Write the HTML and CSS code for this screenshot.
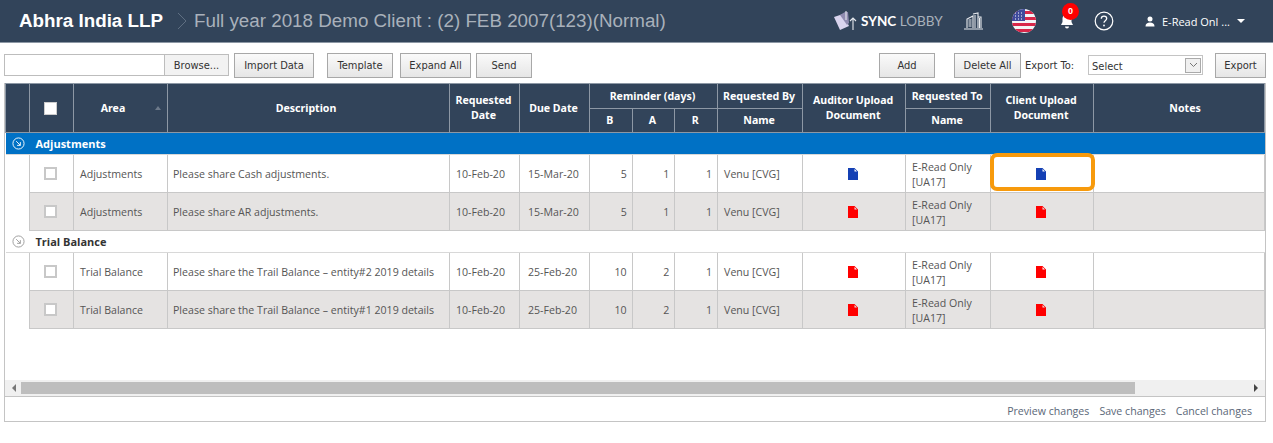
FILE: index.html
```html
<!DOCTYPE html>
<html lang="en">

<head>
    <meta charset="UTF-8">
    <title>Document Requests</title>
    <link rel="stylesheet" href="styles.css">
</head>

<body>
    <header class="topbar">
        <span class="brand">Abhra India LLP</span>
        <svg class="crumb" width="12" height="20" viewBox="0 0 12 20"><path d="M2 2l8 8-8 8" fill="none" stroke="#5f6f82" stroke-width="1"/></svg>
        <span class="title">Full year 2018 Demo Client : (2) FEB 2007(123)(Normal)</span>
        <div class="topicons">
            <svg class="sync-logo" width="24" height="20" viewBox="0 0 24 20">
                <path d="M0 6l9-3 6 12-9 4z" fill="#d9d4ee"/>
                <path d="M6 4l5-3 3 0 1 11-2 2z" fill="#8f8bb0"/>
                <path d="M12 0v9M19 19V7m-3 3l3-3 3 3" fill="none" stroke="#e6e9ee" stroke-width="1.1"/>
            </svg>
            <span class="sync-text"><b>SYNC</b> LOBBY</span>
            <svg class="building" width="20" height="18" viewBox="0 0 20 18">
                <path d="M3 16V7l6-3v12M9 2l5-1v15M14 5h3v11M0 17h19" fill="none" stroke="#e8ebef" stroke-width="1.1"/>
                <path d="M4.500 8h3M4.500 10h3M4.500 12h3M4.500 14h3M11 3v13M15.500 6v10" stroke="#e8ebef" stroke-width="1"/>
            </svg>
            <svg class="flag" width="24" height="24" viewBox="0 0 24 24">
                <defs><clipPath id="round"><circle cx="12" cy="12" r="12"/></clipPath></defs>
                <g clip-path="url(#round)">
                    <rect width="24" height="24" fill="#f4f4f6"/>
                    <path d="M0 2h24v3H0zM0 8h24v3H0zM0 14h24v3H0zM0 20h24v3H0z" fill="#d8274a"/>
                    <rect width="13" height="12" fill="#3f4a9c"/>
                    <path d="M3 4h1M6 4h1M9 4h1M3 7h1M6 7h1M9 7h1M3 10h1M6 10h1M9 10h1" stroke="#fff" stroke-width="1"/>
                </g>
            </svg>
            <div class="bell">
                <svg width="14" height="16" viewBox="0 0 14 16"><path d="M7 1c3 0 4.500 2.500 4.500 5v3L13 12H1l1.500-3V6C2.500 3.500 4 1 7 1zM5 13.500h4a2 2 0 0 1-4 0z" fill="#fff"/></svg>
                <span class="badge">0</span>
            </div>
            <svg class="help" width="20" height="20" viewBox="0 0 20 20">
                <circle cx="10" cy="10" r="8.800" fill="none" stroke="#fff" stroke-width="1.200"/>
                <path d="M7.300 7.800c0-1.700 1.200-2.600 2.700-2.600s2.700 1 2.700 2.400c0 2.100-2.700 2.200-2.700 4.200" fill="none" stroke="#fff" stroke-width="1.300"/>
                <circle cx="10" cy="14.500" r="0.900" fill="#fff"/>
            </svg>
            <div class="user">
                <svg width="10" height="11" viewBox="0 0 10 11"><circle cx="5" cy="3" r="2.500" fill="#fff"/><path d="M0.500 10.500c0-3 2-4 4.500-4s4.500 1 4.500 4z" fill="#fff"/></svg>
                <span>E-Read Onl ...</span>
                <i class="caret"></i>
            </div>
        </div>
    </header>

    <div class="toolbar">
        <div class="file-pick">
            <span class="file-name"></span>
            <button class="browse">Browse...</button>
        </div>
        <button class="btn import">Import Data</button>
        <button class="btn template">Template</button>
        <button class="btn expand">Expand All</button>
        <button class="btn send">Send</button>
        <button class="btn add">Add</button>
        <button class="btn delete">Delete All</button>
        <label class="export-label">Export To:</label>
        <div class="select-box">
            <span class="select-text">Select</span>
            <span class="select-arrow"><svg width="9" height="6" viewBox="0 0 9 6"><path d="M1 1l3.500 3.500L8 1" fill="none" stroke="#777" stroke-width="1"/></svg></span>
        </div>
        <button class="btn export">Export</button>
    </div>

    <main class="panel">
        <table class="grid">
            <colgroup>
                <col class="c-exp"><col class="c-chk"><col class="c-area"><col class="c-desc"><col class="c-date"><col class="c-date">
                <col class="c-b"><col class="c-b"><col class="c-b"><col class="c-name"><col class="c-aud"><col class="c-to"><col class="c-cli"><col>
            </colgroup>
            <thead>
                <tr class="head-top">
                    <th rowspan="2"></th>
                    <th rowspan="2"><span class="head-check"></span></th>
                    <th rowspan="2" class="area-head">Area<i class="sort"></i></th>
                    <th rowspan="2" class="desc-head">Description</th>
                    <th rowspan="2">Requested Date</th>
                    <th rowspan="2">Due Date</th>
                    <th colspan="3">Reminder (days)</th>
                    <th>Requested By</th>
                    <th rowspan="2">Auditor Upload Document</th>
                    <th>Requested To</th>
                    <th rowspan="2">Client Upload Document</th>
                    <th rowspan="2" class="notes-head">Notes</th>
                </tr>
                <tr class="head-bottom">
                    <th>B</th><th>A</th><th>R</th><th>Name</th><th>Name</th>
                </tr>
            </thead>
            <tbody>
                <tr class="group selected">
                    <td class="exp"><svg width="13" height="13" viewBox="0 0 14 14"><circle cx="7" cy="7" r="6" fill="none" stroke="#fff"/><path d="M4.500 4.500L9 9M9 5.500V9H5.500" fill="none" stroke="#fff"/></svg></td>
                    <td colspan="13">Adjustments</td>
                </tr>
                <tr class="row">
                    <td class="blank"></td>
                    <td class="chk"><span class="box"></span></td>
                    <td>Adjustments</td>
                    <td class="desc">Please share Cash adjustments.</td>
                    <td class="date">10-Feb-20</td><td class="due">15-Mar-20</td>
                    <td class="num">5</td><td class="num">1</td><td class="num">1</td>
                    <td>Venu [CVG]</td>
                    <td class="doc"><svg class="file blue" viewBox="0 0 10 12"><path d="M0 0h6.500L10 3.500V12H0zM6.500 1v2.500H9z" fill-rule="evenodd"/></svg></td>
                    <td>E-Read Only [UA17]</td>
                    <td class="doc focus"><svg class="file blue" viewBox="0 0 10 12"><path d="M0 0h6.500L10 3.500V12H0zM6.500 1v2.500H9z" fill-rule="evenodd"/></svg><div class="highlight"></div></td>
                    <td></td>
                </tr>
                <tr class="row alt">
                    <td class="blank"></td>
                    <td class="chk"><span class="box"></span></td>
                    <td>Adjustments</td>
                    <td class="desc">Please share AR adjustments.</td>
                    <td class="date">10-Feb-20</td><td class="due">15-Mar-20</td>
                    <td class="num">5</td><td class="num">1</td><td class="num">1</td>
                    <td>Venu [CVG]</td>
                    <td class="doc"><svg class="file red" viewBox="0 0 10 12"><path d="M0 0h6.500L10 3.500V12H0zM6.500 1v2.500H9z" fill-rule="evenodd"/></svg></td>
                    <td>E-Read Only [UA17]</td>
                    <td class="doc"><svg class="file red" viewBox="0 0 10 12"><path d="M0 0h6.500L10 3.500V12H0zM6.500 1v2.500H9z" fill-rule="evenodd"/></svg></td>
                    <td></td>
                </tr>
                <tr class="group">
                    <td class="exp"><svg width="13" height="13" viewBox="0 0 14 14"><circle cx="7" cy="7" r="6" fill="none" stroke="#999"/><path d="M4.500 4.500L9 9M9 5.500V9H5.500" fill="none" stroke="#999"/></svg></td>
                    <td colspan="13">Trial Balance</td>
                </tr>
                <tr class="row">
                    <td class="blank"></td>
                    <td class="chk"><span class="box"></span></td>
                    <td>Trial Balance</td>
                    <td class="desc">Please share the Trail Balance – entity#2 2019 details</td>
                    <td class="date">10-Feb-20</td><td class="due">25-Feb-20</td>
                    <td class="num">10</td><td class="num">2</td><td class="num">1</td>
                    <td>Venu [CVG]</td>
                    <td class="doc"><svg class="file red" viewBox="0 0 10 12"><path d="M0 0h6.500L10 3.500V12H0zM6.500 1v2.500H9z" fill-rule="evenodd"/></svg></td>
                    <td>E-Read Only [UA17]</td>
                    <td class="doc"><svg class="file red" viewBox="0 0 10 12"><path d="M0 0h6.500L10 3.500V12H0zM6.500 1v2.500H9z" fill-rule="evenodd"/></svg></td>
                    <td></td>
                </tr>
                <tr class="row alt">
                    <td class="blank"></td>
                    <td class="chk"><span class="box"></span></td>
                    <td>Trial Balance</td>
                    <td class="desc">Please share the Trail Balance – entity#1 2019 details</td>
                    <td class="date">10-Feb-20</td><td class="due">25-Feb-20</td>
                    <td class="num">10</td><td class="num">2</td><td class="num">1</td>
                    <td>Venu [CVG]</td>
                    <td class="doc"><svg class="file red" viewBox="0 0 10 12"><path d="M0 0h6.500L10 3.500V12H0zM6.500 1v2.500H9z" fill-rule="evenodd"/></svg></td>
                    <td>E-Read Only [UA17]</td>
                    <td class="doc"><svg class="file red" viewBox="0 0 10 12"><path d="M0 0h6.500L10 3.500V12H0zM6.500 1v2.500H9z" fill-rule="evenodd"/></svg></td>
                    <td></td>
                </tr>
            </tbody>
        </table>
        <div class="scrollbar">
            <i class="arrow-left"></i>
            <div class="track"><div class="thumb"></div></div>
            <i class="arrow-right"></i>
        </div>
        <footer class="actions">
            <a>Preview changes</a>
            <a>Save changes</a>
            <a>Cancel changes</a>
        </footer>
    </main>
</body>

</html>
```

FILE: styles.css
```css
* {
    margin: 0;
    padding: 0;
    box-sizing: border-box;
}

body {
    width: 1273px;
    height: 443px;
    overflow: hidden;
    background-color: white;
    font-family: "Open Sans", "Noto Sans", sans-serif;
    font-size: 10.6px;
    color: #555;
}

/* top bar */
.topbar {
    height: 43px;
    display: flex;
    align-items: center;
    padding-left: 19px;
    background-color: #32445a;
    border-bottom: 1px solid #8d98a5;
    font-family: "Liberation Sans", sans-serif;
}

.brand {
    font-size: 18.8px;
    font-weight: bold;
    color: white;
}

.crumb {
    margin-left: 13px;
    margin-right: 6px;
}

.title {
    font-size: 18.8px;
    color: #a9b1bb;
}

.topicons {
    margin-left: auto;
    display: flex;
    align-items: center;
    height: 100%;
}

.sync-logo {
    margin-right: 3px;
}

.sync-text {
    width: 79px;
    white-space: nowrap;
    font-family: "Lato", sans-serif;
    font-size: 13.5px;
    color: #a9b1bb;
}

.sync-text b {
    color: white;
}

.building {
    margin-left: 24px;
}

.flag {
    margin-left: 28px;
}

.bell {
    position: relative;
    width: 14px;
    height: 16px;
    margin-left: 24px;
}

.badge {
    position: absolute;
    top: -10px;
    left: 2px;
    width: 17px;
    height: 17px;
    border-radius: 50%;
    background-color: #f00;
    color: white;
    font-size: 9px;
    font-weight: bold;
    line-height: 17px;
    text-align: center;
}

.help {
    margin-left: 20px;
}

.user {
    width: 128px;
    margin-left: 31px;
    display: flex;
    align-items: center;
    gap: 7px;
    color: white;
    font-family: "Open Sans", sans-serif;
    font-size: 11px;
}

.caret {
    width: 0;
    height: 0;
    border-left: 4px solid transparent;
    border-right: 4px solid transparent;
    border-top: 4px solid white;
}

/* toolbar */
.toolbar {
    height: 40px;
    display: flex;
    align-items: center;
    padding-left: 4px;
    padding-top: 4px;
    font-family: "DejaVu Sans Condensed", "Noto Sans", sans-serif;
    font-size: 11px;
    color: #333;
}

.file-pick {
    display: flex;
    height: 22px;
    width: 225px;
    border: 1px solid #bdbdbd;
}

.file-name {
    flex: 1;
}

.browse {
    width: 64px;
    border: 0;
    border-left: 1px solid #bdbdbd;
    background-color: #f2f2f2;
    font: inherit;
    color: #333;
}

.btn {
    height: 25px;
    border: 1px solid #a8a8a8;
    background: linear-gradient(#fafafa, #e6e6e6);
    font: inherit;
    color: #333;
}

.import { width: 80px; margin-left: 5px; }
.template { width: 66px; margin-left: 13px; }
.expand { width: 71px; margin-left: 7px; }
.send { width: 56px; margin-left: 5px; }
.add { width: 56px; margin-left: 347px; }
.delete { width: 67px; margin-left: 19px; }

.export-label {
    width: 63px;
    margin-left: 4px;
    white-space: nowrap;
}

.select-box {
    width: 115px;
    height: 20px;
    display: flex;
    align-items: center;
    justify-content: space-between;
    padding: 0 1px 0 3px;
    border: 1px solid #c4c4c4;
    background-color: white;
}

.select-text {
    padding-top: 2px;
}

.select-arrow {
    width: 16px;
    height: 15px;
    display: flex;
    align-items: center;
    justify-content: center;
    border: 1px solid #aaa;
    background-color: #f0f0f0;
}

.export { width: 51px; margin-left: 12px; }

/* grid */
.panel {
    width: 1262px;
    height: 339px;
    margin-left: 4px;
    display: flex;
    flex-direction: column;
    border: 1px solid #c4c4c4;
    border-top: 0;
}

.grid {
    width: 1260px;
    table-layout: fixed;
    border-collapse: collapse;
}

.c-exp { width: 24px; }
.c-chk { width: 44px; }
.c-area { width: 94px; }
.c-desc { width: 282px; }
.c-date { width: 70px; }
.c-b { width: 42.700px; }
.c-name { width: 85px; }
.c-aud { width: 103px; }
.c-to { width: 85px; }
.c-cli { width: 103px; }

.grid th {
    background-color: #32445a;
    border: 1px solid #8d98a5;
    color: white;
    font-family: "Noto Sans", sans-serif;
    font-size: 10.6px;
    font-weight: bold;
    line-height: 15px;
    text-align: center;
    padding: 0 6px 0 4px;
}

.head-top th {
    height: 25px;
}

.head-bottom th {
    height: 24px;
}

.head-check {
    display: block;
    width: 13px;
    height: 13px;
    margin: 0 auto;
    background-color: white;
    border: 1px solid #ccc;
}

.grid th.area-head {
    position: relative;
    padding-right: 19px;
}

.grid th.desc-head {
    padding-right: 9px;
}

.grid th.notes-head {
    padding-left: 18px;
}

.sort {
    position: absolute;
    top: 22px;
    right: 6px;
    border-left: 3px solid transparent;
    border-right: 3px solid transparent;
    border-bottom: 4px solid #6d7a8a;
}

.group td {
    height: 22px;
    font-weight: bold;
    font-size: 11px;
    color: #333;
    padding-left: 6px;
    border-bottom: 1px solid #d8d8d8;
}

.group td.exp {
    padding: 3px 0 0 6px;
    border-right: 0;
}

.selected td {
    background-color: #0071c5;
    color: white;
}

.row td {
    height: 38px;
    padding: 2px 5px 0 6px;
    border: 1px solid #c8c8c8;
    line-height: 15px;
    background-color: white;
}

.row td.blank {
    border-left: 0;
    border-top: 0;
    border-bottom: 0;
}

.alt td {
    background-color: #e5e3e2;
}

.alt td.blank {
    background-color: white;
}

.row td.desc {
    padding-left: 5px;
}

.row td.date {
    padding-left: 6px;
}

.row td.due {
    padding-left: 8px;
}

.row td.num {
    text-align: right;
}

.row td.chk,
.row td.doc {
    text-align: center;
}

.row td.chk {
    padding: 0 7px 0 5px;
}

.row td.doc {
    padding: 0 8px 0 5px;
}

.box {
    display: block;
    width: 13px;
    height: 13px;
    margin: 0 auto;
    background-color: white;
    border: 2px solid #c8c8c8;
}

.file {
    display: block;
    width: 10px;
    height: 12px;
    margin: 0 auto;
}

.blue { fill: #1440b4; }
.red { fill: #f00; }

.focus {
    position: relative;
}

.highlight {
    position: absolute;
    top: -2px;
    left: -1px;
    right: -2px;
    bottom: 1px;
    border: 4px solid #f79a0c;
    border-radius: 7px;
}

.scrollbar {
    height: 17px;
    margin-top: auto;
    display: flex;
    align-items: center;
    background-color: #f0f0f0;
    border-bottom: 1px solid #c4c4c4;
}

.track {
    flex: 1;
    height: 12px;
}

.thumb {
    width: 1114px;
    height: 100%;
    background-color: #bebebe;
}

.arrow-left {
    margin: 0 5px 0 7px;
    border-top: 4px solid transparent;
    border-bottom: 4px solid transparent;
    border-right: 4px solid #777;
}

.arrow-right {
    margin: 0 7px 0 6px;
    border-top: 4px solid transparent;
    border-bottom: 4px solid transparent;
    border-left: 4px solid #444;
}

.actions {
    height: 24px;
    display: flex;
    justify-content: flex-end;
    align-items: center;
    gap: 10px;
    padding-top: 3px;
    padding-right: 13px;
    color: #5b6778;
}
```
